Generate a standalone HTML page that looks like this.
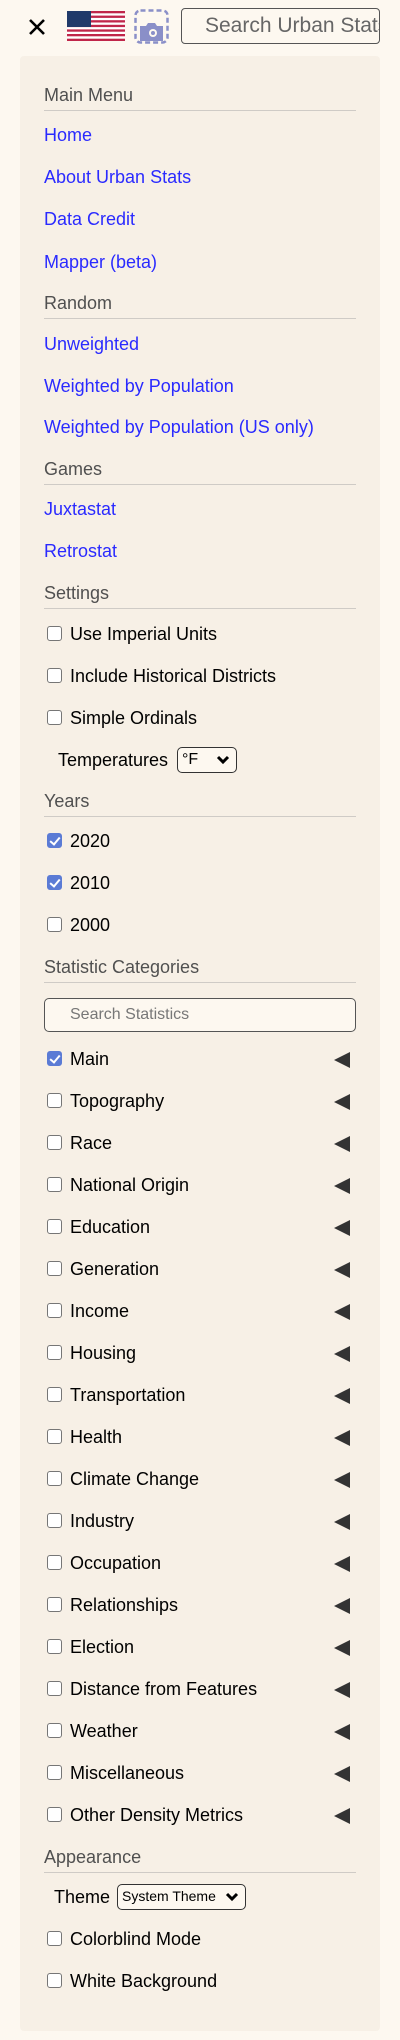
<!DOCTYPE html>
<html><head><meta charset="utf-8"><style>
*{box-sizing:border-box;margin:0;padding:0}
body{width:400px;height:2040px;background:#fdf8f0;font-family:"Liberation Sans",sans-serif;position:relative;overflow:hidden}
.panel{position:absolute;left:20px;top:56px;width:360px;height:1975px;background:#f7f0e6;border-radius:4px}
.r{position:absolute;left:44px;height:42px;line-height:42px;font-size:18px;color:#000;white-space:nowrap;width:312px}
.h{color:#505050}
.h:after{content:"";position:absolute;left:0;right:0;top:36px;border-top:1px solid #cfcbc6}
.a{color:#2a2aff}
.cb{display:inline-block;width:15px;height:15px;border:1px solid #767676;border-radius:3px;background:#fff;vertical-align:middle;margin:-3px 8px 0 3px;position:relative}
.cb.on{background:#5b7bd5;border-color:#5b7bd5}
.cb.on:after{content:"";position:absolute;left:4px;top:1px;width:4px;height:8px;border:solid #fff;border-width:0 2px 2px 0;transform:rotate(40deg)}
.ar{position:absolute;right:6px;top:14px;width:0;height:0;border-top:8px solid transparent;border-bottom:8px solid transparent;border-right:16px solid #333}
.sel{position:absolute;border:1.5px solid #333;border-radius:5px;background:#fdf8f0;height:26px;line-height:23px;font-size:14px;padding-left:4px;top:8px}
.sel svg{position:absolute;right:6px;top:7px}
</style></head><body>
<svg style="position:absolute;left:27px;top:19px" width="20" height="16" viewBox="0 0 20 16"><path d="M3 1L17 15M17 1L3 15" stroke="#000" stroke-width="2.6"/></svg>
<svg style="position:absolute;left:67px;top:11px" width="58" height="30" viewBox="0 0 58 30">
<rect width="58" height="30" fill="#fff"/>
<g fill="#c0264a"><rect y="0" width="58" height="2.3"/><rect y="4.6" width="58" height="2.3"/><rect y="9.2" width="58" height="2.3"/><rect y="13.8" width="58" height="2.3"/><rect y="18.4" width="58" height="2.3"/><rect y="23" width="58" height="2.3"/><rect y="27.7" width="58" height="2.3"/></g>
<rect width="24" height="16" fill="#203a6a"/>
</svg>
<svg style="position:absolute;left:134px;top:9px" width="35" height="35" viewBox="0 0 35 35">
<rect x="1.5" y="1.5" width="32" height="32" rx="5" fill="none" stroke="#8a8fc8" stroke-width="2.5" stroke-dasharray="5 3"/>
<path d="M6 17h6l2-3h7l2 3h6v15H6z" fill="#8a8fc8"/>
<circle cx="19" cy="24" r="4" fill="#fdf8f0"/><circle cx="19" cy="24" r="2" fill="#8a8fc8"/>
</svg>
<div style="position:absolute;left:181px;top:8px;width:199px;height:36px;border:1px solid #555;border-radius:4px;overflow:hidden;font-size:21px;line-height:34px;color:#666;padding-left:23px;white-space:nowrap">Search Urban Stats</div>
<div class="panel"></div>
<div class="r h" style="top:74px">Main Menu</div>
<div class="r a" style="top:114px">Home</div>
<div class="r a" style="top:156px">About Urban Stats</div>
<div class="r a" style="top:198px">Data Credit</div>
<div class="r a" style="top:241px">Mapper (beta)</div>
<div class="r h" style="top:282px">Random</div>
<div class="r a" style="top:323px">Unweighted</div>
<div class="r a" style="top:365px">Weighted by Population</div>
<div class="r a" style="top:406px">Weighted by Population (US only)</div>
<div class="r h" style="top:448px">Games</div>
<div class="r a" style="top:488px">Juxtastat</div>
<div class="r a" style="top:530px">Retrostat</div>
<div class="r h" style="top:572px">Settings</div>
<div class="r" style="top:613px"><span class="cb"></span>Use Imperial Units</div>
<div class="r" style="top:655px"><span class="cb"></span>Include Historical Districts</div>
<div class="r" style="top:697px"><span class="cb"></span>Simple Ordinals</div>
<div class="r" style="top:739px;padding-left:14px">Temperatures <span class="sel" style="left:133px;width:60px;font-size:16px">°F<svg width="14" height="10" viewBox="0 0 14 10"><path d="M2 2l5 5 5-5" fill="none" stroke="#000" stroke-width="3"/></svg></span></div>
<div class="r h" style="top:780px">Years</div>
<div class="r" style="top:820px"><span class="cb on"></span>2020</div>
<div class="r" style="top:862px"><span class="cb on"></span>2010</div>
<div class="r" style="top:904px"><span class="cb"></span>2000</div>
<div class="r h" style="top:946px">Statistic Categories</div>
<div style="position:absolute;left:44px;top:998px;width:312px;height:34px;border:1.5px solid #555;border-radius:5px;background:#fdf8f0;font-size:16px;line-height:31px;color:#777;padding-left:25px">Search Statistics</div>
<div class="r" style="top:1038px"><span class="cb on"></span>Main<span class="ar"></span></div>
<div class="r" style="top:1080px"><span class="cb"></span>Topography<span class="ar"></span></div>
<div class="r" style="top:1122px"><span class="cb"></span>Race<span class="ar"></span></div>
<div class="r" style="top:1164px"><span class="cb"></span>National Origin<span class="ar"></span></div>
<div class="r" style="top:1206px"><span class="cb"></span>Education<span class="ar"></span></div>
<div class="r" style="top:1248px"><span class="cb"></span>Generation<span class="ar"></span></div>
<div class="r" style="top:1290px"><span class="cb"></span>Income<span class="ar"></span></div>
<div class="r" style="top:1332px"><span class="cb"></span>Housing<span class="ar"></span></div>
<div class="r" style="top:1374px"><span class="cb"></span>Transportation<span class="ar"></span></div>
<div class="r" style="top:1416px"><span class="cb"></span>Health<span class="ar"></span></div>
<div class="r" style="top:1458px"><span class="cb"></span>Climate Change<span class="ar"></span></div>
<div class="r" style="top:1500px"><span class="cb"></span>Industry<span class="ar"></span></div>
<div class="r" style="top:1542px"><span class="cb"></span>Occupation<span class="ar"></span></div>
<div class="r" style="top:1584px"><span class="cb"></span>Relationships<span class="ar"></span></div>
<div class="r" style="top:1626px"><span class="cb"></span>Election<span class="ar"></span></div>
<div class="r" style="top:1668px"><span class="cb"></span>Distance from Features<span class="ar"></span></div>
<div class="r" style="top:1710px"><span class="cb"></span>Weather<span class="ar"></span></div>
<div class="r" style="top:1752px"><span class="cb"></span>Miscellaneous<span class="ar"></span></div>
<div class="r" style="top:1794px"><span class="cb"></span>Other Density Metrics<span class="ar"></span></div>
<div class="r h" style="top:1836px">Appearance</div>
<div class="r" style="top:1876px;padding-left:10px">Theme <span class="sel" style="left:73px;width:129px">System Theme<svg width="14" height="10" viewBox="0 0 14 10"><path d="M2 2l5 5 5-5" fill="none" stroke="#000" stroke-width="3"/></svg></span></div>
<div class="r" style="top:1918px"><span class="cb"></span>Colorblind Mode</div>
<div class="r" style="top:1960px"><span class="cb"></span>White Background</div>
</body></html>
